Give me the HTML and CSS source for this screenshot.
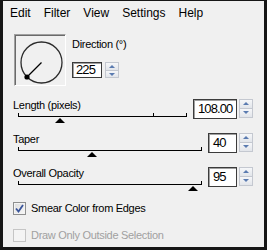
FILE: index.html
```html
<!DOCTYPE html>
<html lang="en">
  <head>
    <meta charset="UTF-8" />
    <title>Motion Blur</title>
    <link rel="stylesheet" href="styles.css">
  </head>

  <body>
    <div class="window">
      <!-- menu -->
      <div class="menu">
        <span>Edit</span>
        <span>Filter</span>
        <span>View</span>
        <span>Settings</span>
        <span>Help</span>
      </div>

      <!-- direction -->
      <div class="direction">
        <div class="preview">
          <svg width="51" height="51" viewBox="0 0 51 51">
            <circle cx="26.5" cy="27.5" r="20.5" fill="none" stroke="#2b2b2b" stroke-width="1.3" />
            <line x1="26.5" y1="27.5" x2="12" y2="42" stroke="#000" stroke-width="1.3" />
            <circle cx="12" cy="42" r="2.6" fill="#000" />
          </svg>
        </div>
        <div class="direction-col">
          <div class="label">Direction (°)</div>
          <div class="field">
            <div class="input input-short">225</div>
            <div class="spin spin-short"><span class="up"></span><span class="down"></span></div>
          </div>
        </div>
      </div>

      <!-- sliders -->
      <div class="param">
        <div class="param-left">
          <div class="label">Length (pixels)</div>
          <div class="slider">
            <span class="tick tick-start"></span>
            <span class="tick" style="left: 135px"></span>
            <span class="tick tick-end"></span>
            <span class="thumb" style="left: 37px"></span>
          </div>
        </div>
        <div class="input input-wide">108.00</div>
        <div class="spin"><span class="up"></span><span class="down"></span></div>
      </div>

      <div class="param">
        <div class="param-left">
          <div class="label">Taper</div>
          <div class="slider">
            <span class="tick tick-start"></span>
            <span class="tick tick-end"></span>
            <span class="thumb" style="left: 69px"></span>
          </div>
        </div>
        <div class="input">40</div>
        <div class="spin"><span class="up"></span><span class="down"></span></div>
      </div>

      <div class="param">
        <div class="param-left">
          <div class="label">Overall Opacity</div>
          <div class="slider">
            <span class="tick tick-start"></span>
            <span class="tick tick-end"></span>
            <span class="thumb" style="left: 170px"></span>
          </div>
        </div>
        <div class="input">95</div>
        <div class="spin"><span class="up"></span><span class="down"></span></div>
      </div>

      <!-- options -->
      <div class="check">
        <span class="box checked">
          <svg width="11" height="11" viewBox="0 0 11 11">
            <polyline points="2,5.5 4.5,8.5 9,2" fill="none" stroke="#3a559b" stroke-width="1.8" />
          </svg>
        </span>
        <span class="label">Smear Color from Edges</span>
      </div>
      <div class="check disabled">
        <span class="box"></span>
        <span class="label">Draw Only Outside Selection</span>
      </div>
    </div>
  </body>
</html>
```

FILE: styles.css
```css
* {
  margin: 0;
  padding: 0;
  box-sizing: border-box;
}
body {
  background: #f0f0f0;
  font-family: "Liberation Sans", Arial, sans-serif;
  color: #000;
}
.window {
  width: 267px;
  height: 250px;
  background: #f0f0f0;
  border: 3px solid #161616;
  border-top-width: 1px;
}

/* menu */
.menu {
  display: flex;
  gap: 13px;
  padding: 5px 0 0 7px;
  font-size: 12px;
  line-height: 14px;
}

/* text */
.label {
  font-size: 11px;
  line-height: 13px;
  letter-spacing: -0.3px;
  white-space: nowrap;
}

/* direction block */
.direction {
  display: flex;
  margin-top: 14px;
  padding-left: 11px;
}
.preview {
  width: 52px;
  height: 52px;
  border-top: 1px solid #a0a0a0;
  border-left: 1px solid #a0a0a0;
  border-right: 1px solid #fff;
  border-bottom: 1px solid #fff;
  box-shadow: inset 1px 1px 0 #6a6a6a;
}
.preview svg {
  display: block;
}
.direction-col {
  margin-left: 6px;
  padding-top: 4px;
}
.field {
  display: flex;
  gap: 3px;
  margin-top: 11px;
}

/* inputs */
.input {
  width: 29px;
  height: 20px;
  background: #fff;
  border: 1px solid #3c3c3c;
  box-shadow: inset 1px 1px 0 #a0a0a0;
  font-size: 13px;
  letter-spacing: -0.9px;
  line-height: 18px;
  padding-left: 4px;
  white-space: nowrap;
  overflow: hidden;
}
.input-short {
  width: 30px;
  height: 16px;
  line-height: 14px;
  padding-left: 3px;
}
.input-wide {
  width: 44px;
}
.spin {
  display: flex;
  flex-direction: column;
  width: 14px;
  height: 19px;
  margin-left: 2px;
}
.spin-short {
  height: 16px;
  margin-left: 0;
}
.spin span {
  flex: 1;
  position: relative;
  border: 1px solid #c4c8d0;
  background: linear-gradient(#f6f7f9, #e2e5ea);
}
.spin span + span {
  border-top: none;
}
.spin span::after {
  content: "";
  position: absolute;
  left: 3px;
  border-left: 3px solid transparent;
  border-right: 3px solid transparent;
}
.spin .up::after {
  top: 2px;
  border-bottom: 3px solid #5a7bb0;
}
.spin .down::after {
  top: 2px;
  border-top: 3px solid #5a7bb0;
}

/* slider rows */
.param {
  display: flex;
  align-items: flex-start;
  margin-top: 9px;
  padding: 0 11px 0 10px;
}
.direction + .param {
  margin-top: 13px;
}
.param-left {
  flex: 1;
  margin-right: 6px;
}
.slider {
  position: relative;
  height: 12px;
  margin-left: 5px;
}
.slider::before {
  content: "";
  position: absolute;
  left: 0;
  right: 0;
  top: 4px;
  height: 1px;
  background: #000;
}
.tick {
  position: absolute;
  top: 1px;
  width: 1px;
  height: 3px;
  background: #000;
}
.tick-start {
  left: 0;
}
.tick-end {
  right: 0;
}
.thumb {
  position: absolute;
  top: 6px;
  width: 0;
  height: 0;
  border-left: 5.5px solid transparent;
  border-right: 5.5px solid transparent;
  border-bottom: 5px solid #000;
}

/* checkboxes */
.check {
  display: flex;
  align-items: center;
  gap: 5px;
  margin-top: 10px;
  padding-left: 10px;
}
.check + .check {
  margin-top: 14px;
}
.box {
  width: 13px;
  height: 13px;
  border: 1px solid #8e8f8f;
  background: linear-gradient(135deg, #dcdcdc, #f8f8f8);
  box-shadow: inset 0 0 0 1px #f4f4f4;
}
.box svg {
  display: block;
}
.disabled .box {
  border-color: #c5c5c5;
  background: #f4f4f4;
}
.disabled .label {
  color: #a0a0a0;
}
```
